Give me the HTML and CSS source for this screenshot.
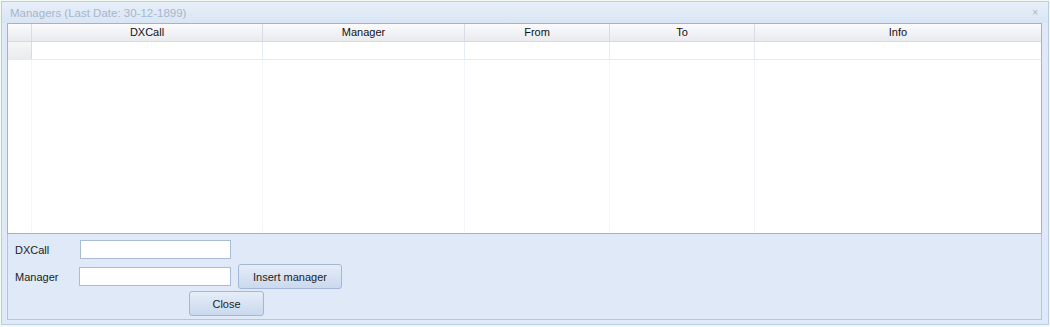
FILE: index.html
```html
<!DOCTYPE html>
<html lang="en">

<head>
    <meta charset="UTF-8">
    <title>Managers</title>
    <link rel="stylesheet" href="styles.css">
</head>

<body>
    <div class="window">
        <div class="titlebar">
            <span class="title">Managers (Last Date: 30-12-1899)</span>
            <span class="close-x">&#215;</span>
        </div>

        <div class="grid">
            <div class="grid-head">
                <div class="cell indicator"></div>
                <div class="cell col-dxcall">DXCall</div>
                <div class="cell col-manager">Manager</div>
                <div class="cell col-from">From</div>
                <div class="cell col-to">To</div>
                <div class="cell col-info">Info</div>
            </div>
            <div class="grid-row">
                <div class="cell indicator"></div>
                <div class="cell col-dxcall"></div>
                <div class="cell col-manager"></div>
                <div class="cell col-from"></div>
                <div class="cell col-to"></div>
                <div class="cell col-info"></div>
            </div>
            <div class="grid-body">
                <div class="cell indicator"></div>
                <div class="cell col-dxcall"></div>
                <div class="cell col-manager"></div>
                <div class="cell col-from"></div>
                <div class="cell col-to"></div>
                <div class="cell col-info"></div>
            </div>
        </div>

        <div class="panel">
            <div class="form-row">
                <label class="label">DXCall</label>
                <input type="text" class="field field-dxcall">
            </div>
            <div class="form-row">
                <label class="label">Manager</label>
                <input type="text" class="field field-manager">
                <button class="btn btn-insert">Insert manager</button>
            </div>
            <div class="form-row row-close">
                <button class="btn btn-close">Close</button>
            </div>
        </div>
    </div>
</body>

</html>
```

FILE: styles.css
```css
body {
    margin: 0;
    background-color: #f3faf3;
    font-family: "Liberation Sans", Arial, sans-serif;
    font-size: 11px;
    color: #222;
}

.window {
    width: 1046px;
    height: 322px;
    margin: 1px 0 0 1px;
    border: 1px solid #b9cde6;
    background-color: #dfe9f7;
    display: flex;
    flex-direction: column;
}

.titlebar {
    flex-shrink: 0;
    height: 21px;
    display: flex;
    align-items: center;
    justify-content: space-between;
    padding: 0 10px 0 8px;
    background: linear-gradient(#e8eff9, #d9e5f4);
}

.title {
    color: #a6b6cc;
    font-size: 11.5px;
}

.close-x {
    color: #a8b4c4;
    font-size: 10px;
}

/* grid */

.grid {
    flex-shrink: 0;
    margin: 0 6px 0 5px;
    height: 209px;
    border: 1px solid #99b4d6;
    background-color: white;
    display: flex;
    flex-direction: column;
}

.grid-head,
.grid-row,
.grid-body {
    display: flex;
}

.grid-head {
    height: 17px;
    background: linear-gradient(#fbfbfc, #e8eaee);
    border-bottom: 1px solid #d6dbe3;
}

.grid-head .cell {
    border-right: 1px solid #d8dde5;
    text-align: center;
    line-height: 16px;
    color: #111;
}

.grid-row {
    height: 17px;
    border-bottom: 1px solid #e4ebf5;
}

.grid-row .cell {
    border-right: 1px solid #e4ebf5;
}

.grid-body {
    flex: 1;
}

.grid-body .cell {
    border-right: 1px solid #f2f5fa;
}

.cell {
    box-sizing: border-box;
}

.indicator {
    width: 24px;
}

.grid-row .indicator {
    background: linear-gradient(#f6f6f7, #eaebee);
    border-right-color: #d8dde5;
}

.col-dxcall { width: 231px; }
.col-manager { width: 202px; }
.col-from { width: 145px; }
.col-to { width: 145px; }
.col-info { flex: 1; }

.grid .cell.col-info { border-right: none; }

/* bottom panel */

.panel {
    flex: 1;
    margin: 0 6px 4px 5px;
    border: 1px solid #b2c6e0;
    border-top: none;
    padding: 6px 0 0 7px;
}

.form-row {
    display: flex;
    align-items: center;
    height: 19px;
    margin-bottom: 8px;
}

.label {
    width: 64px;
}

.field {
    box-sizing: border-box;
    height: 19px;
    border: 1px solid #a8bcd6;
    background-color: white;
    padding: 0 3px;
    margin: 0;
}

.field-dxcall {
    width: 151px;
    margin-left: 1px;
}

.field-manager {
    width: 152px;
}

.btn {
    box-sizing: border-box;
    height: 25px;
    border: 1px solid #a2b8d4;
    border-radius: 3px;
    background: linear-gradient(#e5edf8, #cad9ee);
    font-family: "Liberation Sans", Arial, sans-serif;
    font-size: 11px;
    color: #222;
    padding: 0;
}

.btn-insert {
    width: 104px;
    margin-left: 7px;
}

.row-close {
    margin-top: 3px;
    margin-bottom: 0;
}

.btn-close {
    width: 75px;
    margin-left: 174px;
}
```
